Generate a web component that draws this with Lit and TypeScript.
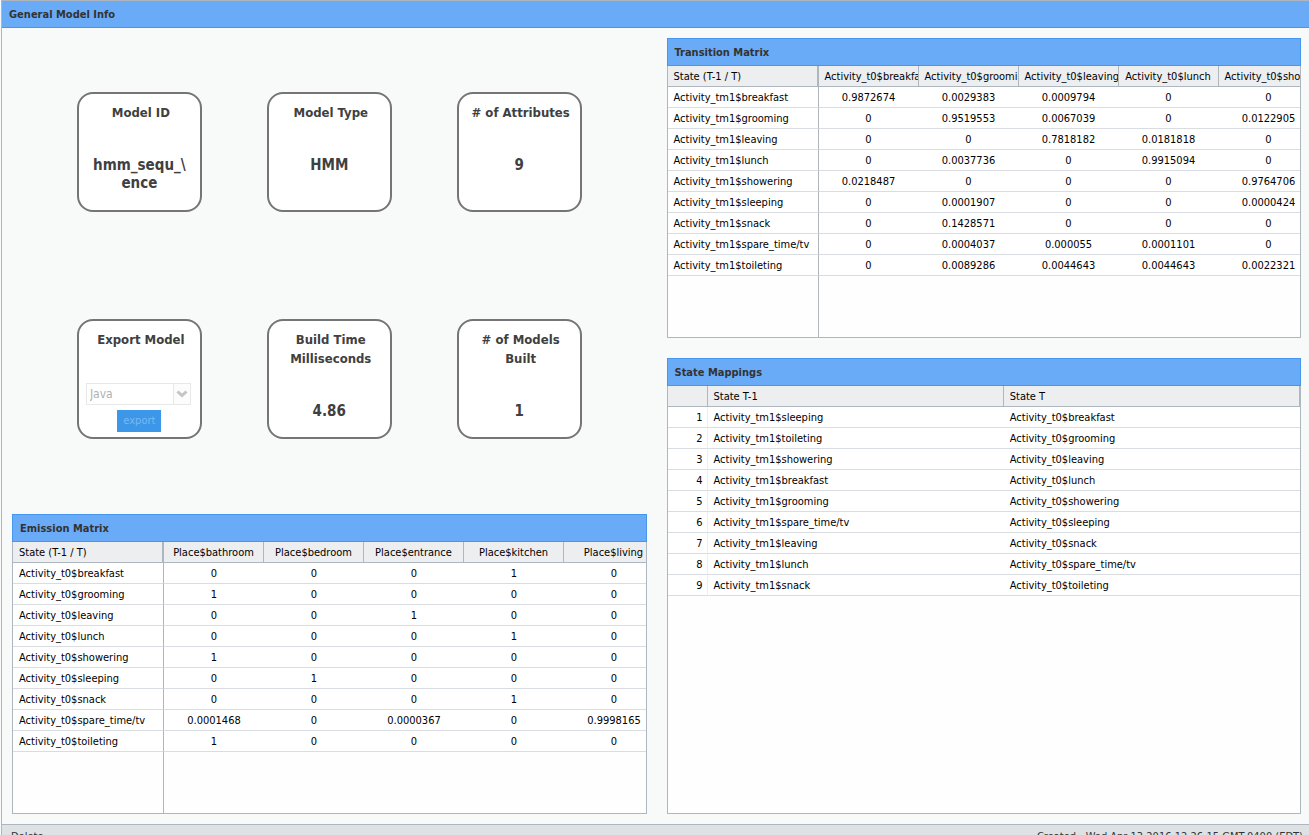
import { LitElement, html, css, nothing } from "lit";
import { customElement, property, state } from "lit/decorators.js";

const gridStyles = css`
  * { box-sizing: border-box; }
  table { border-collapse: separate; border-spacing: 0; table-layout: fixed; }
  th, td {
    height: 21px; padding: 2px 6px 0; font-size: 11px; line-height: 18px; font-weight: 400;
    color: #000; white-space: nowrap; overflow: hidden; text-align: left;
  }
  th { background: #edeef0; border-bottom: 1px solid #aeb7bf; border-right: 1px solid #aeb7bf; }
  td { background: #fff; border-bottom: 1px solid #d9dce0; }
`;

@customElement("info-panel")
class InfoPanel extends LitElement {
  static styles = css`
    :host { display: flex; flex-direction: column; min-width: 0; overflow: hidden; }
    .title {
      box-sizing: border-box; margin: 0; height: 28px; padding: 2px 7px 0; flex: none;
      font-size: 11px; line-height: 24px; font-weight: 700; color: #333;
      background: #6aabf7; border: 1px solid #4796ee;
    }
    .body {
      flex: 1; display: flex; flex-direction: column; overflow: hidden;
      background: #fefefe; border: 1px solid #aeb7bf; border-top: 0;
    }
  `;
  @property() heading = "";
  render() {
    return html`<h2 class="title">${this.heading}</h2><div class="body"><slot></slot></div>`;
  }
}

@customElement("matrix-grid")
class MatrixGrid extends LitElement {
  static styles = [gridStyles, css`
    :host { flex: 1; display: flex; flex-direction: column; }
    table { flex: none; width: 651px; }
    .state { width: 151px; border-right: 1px solid #aeb7bf; }
    .corner { width: 151px; border-right-width: 2px; }
    .num { text-align: center; }
    .column { padding-left: 0; padding-right: 0; }
    .label { display: flex; justify-content: safe center; padding: 0 6px; overflow: hidden; }
    .rest { flex: 1; width: 151px; border-right: 1px solid #aeb7bf; }
  `];
  @property({ attribute: false }) columns: string[] = [];
  @property({ attribute: false }) rows: string[][] = [];
  render() {
    return html`
      <table>
        <thead><tr>
          <th class="corner" scope="col">State (T-1 / T)</th>
          ${this.columns.map((c) => html`<th class="column" scope="col"><span class="label">${c}</span></th>`)}
        </tr></thead>
        <tbody>
          ${this.rows.map(([name, ...cells]) => html`<tr>
            <td class="state">${name}</td>
            ${cells.map((v) => html`<td class="num">${v}</td>`)}
          </tr>`)}
        </tbody>
      </table>
      <div class="rest"></div>`;
  }
}

@customElement("mapping-grid")
class MappingGrid extends LitElement {
  static styles = [gridStyles, css`
    :host { display: block; }
    table { width: 100%; }
    .index { width: 40px; padding-right: 4px; text-align: right; border-right: 1px solid #edeef0; }
    th.index { border-right-color: #aeb7bf; }
  `];
  @property({ attribute: false }) rows: string[][] = [];
  render() {
    return html`
      <table>
        <thead><tr><th class="index"></th><th scope="col">State T-1</th><th scope="col">State T</th></tr></thead>
        <tbody>
          ${this.rows.map(([a, b], i) => html`<tr><td class="index">${i + 1}</td><td>${a}</td><td>${b}</td></tr>`)}
        </tbody>
      </table>`;
  }
}

@customElement("stat-card")
class StatCard extends LitElement {
  static styles = css`
    :host {
      box-sizing: border-box; display: block; width: 125px; height: 120px; padding: 9px 7px 0;
      background: #fff; border: 2px solid #757575; border-radius: 16px; color: #404040; text-align: center;
    }
    .title { margin: 0 0 34px; padding: 0 2px 0 5px; font-size: 13px; line-height: 19px; font-weight: 700; }
    .value { margin: 0; font-size: 15px; line-height: 18px; font-weight: 700; white-space: pre-line; }
  `;
  @property() heading = "";
  @property() value = "";
  render() {
    return html`<h3 class="title">${this.heading}</h3>
      ${this.value ? html`<p class="value">${this.value}</p>` : nothing}<slot></slot>`;
  }
}

const T0 = "Activity_t0$";
const T1 = "Activity_tm1$";
const STATES = ["breakfast", "grooming", "leaving", "lunch", "showering", "sleeping", "snack", "spare_time/tv", "toileting"];

const TRANSITIONS = [
  ["0.9872674", "0.0029383", "0.0009794", "0", "0"],
  ["0", "0.9519553", "0.0067039", "0", "0.0122905"],
  ["0", "0", "0.7818182", "0.0181818", "0"],
  ["0", "0.0037736", "0", "0.9915094", "0"],
  ["0.0218487", "0", "0", "0", "0.9764706"],
  ["0", "0.0001907", "0", "0", "0.0000424"],
  ["0", "0.1428571", "0", "0", "0"],
  ["0", "0.0004037", "0.000055", "0.0001101", "0"],
  ["0", "0.0089286", "0.0044643", "0.0044643", "0.0022321"],
];

const EMISSIONS = [
  ["0", "0", "0", "1", "0"],
  ["1", "0", "0", "0", "0"],
  ["0", "0", "1", "0", "0"],
  ["0", "0", "0", "1", "0"],
  ["1", "0", "0", "0", "0"],
  ["0", "1", "0", "0", "0"],
  ["0", "0", "0", "1", "0"],
  ["0.0001468", "0", "0.0000367", "0", "0.9998165"],
  ["1", "0", "0", "0", "0"],
];

const MAPPED = ["sleeping", "toileting", "showering", "breakfast", "grooming", "spare_time/tv", "leaving", "lunch", "snack"];

@customElement("app-root")
class AppRoot extends LitElement {
  static styles = css`
    :host {
      display: block; height: 100vh; overflow: hidden; background: #f8faf9;
      font-family: "DejaVu Sans Condensed", Tahoma, "DejaVu Sans", sans-serif;
    }
    * { box-sizing: border-box; }
    .window { margin-left: 1px; border-left: 1px solid #aeb7bf; border-top: 1px solid #aeb7bf; }
    .title {
      margin: 0; height: 27px; padding: 2px 7px 0; font-size: 11px; line-height: 24px; font-weight: 700;
      color: #333; background: #6aabf7; border-bottom: 1px solid #4796ee;
    }
    .main { display: grid; grid-template-columns: 1fr 1fr; gap: 20px; padding: 10px 8px 10px 10px; }
    .column { display: flex; flex-direction: column; gap: 20px; min-width: 0; }
    .matrix { min-height: 300px; }
    .tall { min-height: 456px; }
    .cards {
      display: grid; grid-template-columns: repeat(3, 125px); row-gap: 107px; padding-top: 54px;
      justify-content: space-evenly; align-content: start;
    }
    .export { display: flex; flex-direction: column; align-items: center; gap: 5px; }
    .picker {
      position: relative; display: flex; align-self: flex-start;
      width: 105px; height: 22px; border: 1px solid #e8e8e8;
    }
    .select {
      appearance: none; width: 100%; margin: 0; padding: 0 22px 0 3px; border: 0; border-radius: 0;
      background: transparent; color: #b0b0b0; opacity: 1; font-family: inherit; font-size: 12px;
    }
    .arrow {
      position: absolute; right: 0; top: 0; width: 17px; height: 20px;
      border-left: 1px solid #e8e8e8; background: #fcfcfc; pointer-events: none;
    }
    .button {
      height: 22px; padding: 0 6px; border: 0; background: #3c97e8; color: #79b8f2;
      font-family: inherit; font-size: 11px; line-height: 22px;
    }
    .footer {
      display: flex; justify-content: space-between; padding: 5px 6px 9px 9px; border-top: 1px solid #aeb7bf;
      background: #dfe2e5; color: #333; font-size: 11px; line-height: 14px;
    }
  `;

  @state() private format = "Java";

  render() {
    return html`
      <div class="window">
        <h1 class="title">General Model Info</h1>
        <main class="main">
          <div class="column">
            <section class="cards tall">
              <stat-card heading="Model ID" value=${"hmm_sequ_\\\nence"}></stat-card>
              <stat-card heading="Model Type" value="HMM"></stat-card>
              <stat-card heading="# of Attributes" value="9"></stat-card>
              <stat-card heading="Export Model">
                <div class="export">
                  <div class="picker">
                    <select class="select" aria-label="Export format" disabled>
                      <option>${this.format}</option>
                    </select>
                    <svg class="arrow" viewBox="0 0 16 20" aria-hidden="true">
                      <path d="M3.5 7.5 L8 11.5 L12.5 7.5" fill="none" stroke="#c4c4c4" stroke-width="3" />
                    </svg>
                  </div>
                  <button class="button" type="button" disabled>export</button>
                </div>
              </stat-card>
              <stat-card heading="Build Time Milliseconds" value="4.86"></stat-card>
              <stat-card heading="# of Models Built" value="1"></stat-card>
            </section>
            <info-panel class="matrix" heading="Emission Matrix">
              <matrix-grid
                .columns=${["bathroom", "bedroom", "entrance", "kitchen", "living"].map((p) => "Place$" + p)}
                .rows=${EMISSIONS.map((r, i) => [T0 + STATES[i], ...r])}
              ></matrix-grid>
            </info-panel>
          </div>
          <div class="column">
            <info-panel class="matrix" heading="Transition Matrix">
              <matrix-grid
                .columns=${STATES.slice(0, 5).map((s) => T0 + s)}
                .rows=${TRANSITIONS.map((r, i) => [T1 + STATES[i], ...r])}
              ></matrix-grid>
            </info-panel>
            <info-panel class="tall" heading="State Mappings">
              <mapping-grid .rows=${MAPPED.map((m, i) => [T1 + m, T0 + STATES[i]])}></mapping-grid>
            </info-panel>
          </div>
        </main>
        <footer class="footer">
          <span>Delete</span>
          <span>Created : Wed Apr 13 2016 12:26:15 GMT-0400 (EDT)</span>
        </footer>
      </div>`;
  }
}
